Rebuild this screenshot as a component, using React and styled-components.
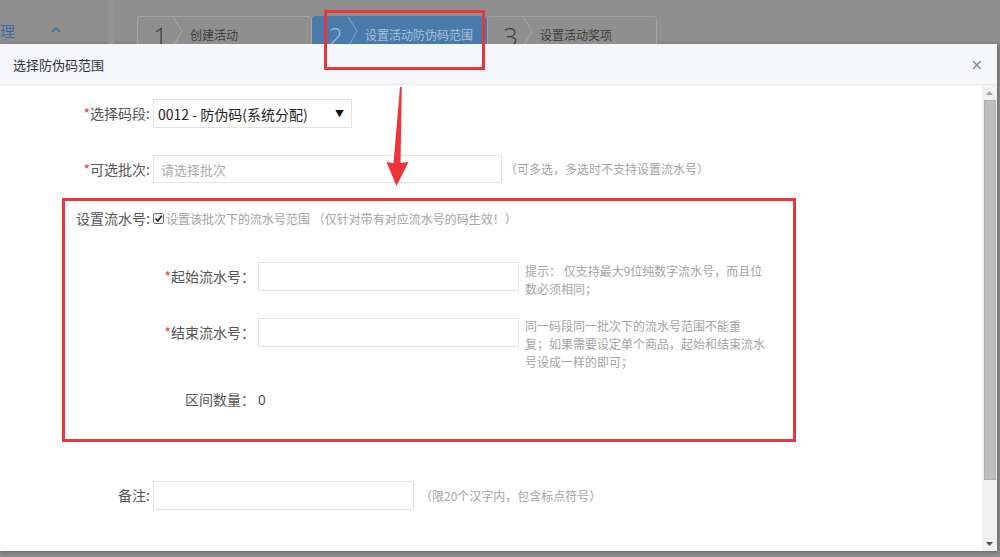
import React from 'react';
import styled, { createGlobalStyle } from 'styled-components';

const GlobalStyle = createGlobalStyle`
  html, body { margin: 0; padding: 0; }
  body {
    background: #8f8f8f;
    font-family: "Noto Sans CJK SC", "Noto Sans", sans-serif;
    overflow: hidden;
  }
`;

const Page = styled.div`
  position: relative;
  width: 1000px;
  height: 557px;
  overflow: hidden;
`;

/* ---- dimmed page behind the dialog ---- */
const BackTop = styled.div`
  display: flex;
  height: 44px;
  overflow: hidden;
`;

const Sidebar = styled.div`
  width: 108px;
  flex-shrink: 0;
  border-right: 6px solid #939393;
  display: flex;
  align-items: flex-start;
  padding-top: 20px;
  gap: 36px;
  color: #3f6c9c;
  font-size: 15px;
`;

const Steps = styled.div`
  display: flex;
  padding: 16px 0 0 23px;
`;

const Step = styled.div`
  width: ${p => p.$w}px;
  height: 44px;
  box-sizing: border-box;
  display: flex;
  align-items: flex-start;
  padding-left: 15px;
  background: ${p => (p.$active ? '#4a7aab' : '#8f8f8f')};
  border: 1px solid ${p => (p.$active ? '#4a7aab' : '#a2a2a2')};
  border-bottom: none;
  border-radius: 4px 4px 0 0;
  color: ${p => (p.$active ? '#a8c0d9' : '#3c3c3c')};
`;

const StepNum = styled.span`
  font-family: "Open Sans", "DejaVu Sans", sans-serif;
  font-weight: 300;
  font-size: 26px;
  line-height: 26px;
  margin-top: 6px;
  width: 14px;
`;

const StepSep = styled.svg`
  margin: 0 6px 0 5px;
  flex-shrink: 0;
`;

const StepText = styled.span`
  font-size: 12px;
  line-height: 14px;
  margin-top: 11px;
`;

/* ---- dialog ---- */
const Modal = styled.div`
  width: 997px;
  height: 507px;
  background: #fff;
  box-shadow: 1px 1px 4px rgba(0, 0, 0, 0.35);
  display: flex;
  flex-direction: column;
`;

const Header = styled.div`
  height: 40px;
  flex-shrink: 0;
  display: flex;
  align-items: center;
  justify-content: space-between;
  padding: 0 14px 0 13px;
  background: #f6f7fa;
  border-bottom: 1px solid #e9e9e9;
`;

const Title = styled.span`
  font-size: 13px;
  color: #333;
`;

const Close = styled.span`
  font-family: "DejaVu Sans", sans-serif;
  font-size: 15px;
  color: #8a8a8a;
  margin-top: 1px;
`;

const Body = styled.div`
  flex: 1;
  display: flex;
  min-height: 0;
`;

const Content = styled.div`
  position: relative;
  flex: 1;
  display: flex;
  flex-direction: column;
  padding-top: 14px;
`;

const Row = styled.div`
  display: flex;
  align-items: ${p => (p.$top ? 'flex-start' : 'center')};
  margin-top: ${p => p.$mt || 0}px;
`;

const Label = styled.label`
  width: ${p => p.$w}px;
  flex-shrink: 0;
  height: ${p => p.$h || 29}px;
  line-height: ${p => p.$h || 29}px;
  text-align: right;
  margin-right: 3px;
  font-size: 14px;
  color: #555;
`;

const Star = styled.span`
  color: #e4393c;
`;

const Select = styled.div`
  width: 199px;
  height: 29px;
  box-sizing: border-box;
  border: 1px solid #e2e2e2;
  display: flex;
  align-items: center;
  justify-content: space-between;
  padding: 0 7px 0 4px;
  font-size: 14px;
  color: #222;
`;

const Caret = styled.span`
  font-size: 9px;
  color: #111;
`;

const Input = styled.div`
  width: ${p => p.$w}px;
  height: ${p => p.$h || 29}px;
  box-sizing: border-box;
  border: 1px solid #e3e3e3;
  flex-shrink: 0;
  display: flex;
  align-items: center;
  padding-left: 7px;
  font-size: 13px;
  color: #aaa;
`;

const Hint = styled.div`
  font-size: 12px;
  line-height: 18px;
  color: #a4a4a4;
  margin-left: ${p => p.$ml || 8}px;
  width: ${p => (p.$w ? `${p.$w}px` : 'auto')};
  margin-top: ${p => p.$mtop || 0}px;
`;

const Check = styled.span`
  width: 11px;
  height: 11px;
  box-sizing: border-box;
  border: 1px solid #777;
  border-radius: 2px;
  background: #f1f1f1;
  display: flex;
  align-items: center;
  justify-content: center;
  margin-right: 2px;
`;

const CheckText = styled.span`
  font-size: 12px;
  color: #a4a4a4;
`;

const Value = styled.span`
  font-size: 14px;
  color: #555;
`;

/* ---- fake scrollbar ---- */
const ScrollBar = styled.div`
  width: 15px;
  flex-shrink: 0;
  background: #f1f1f1;
  display: flex;
  flex-direction: column;
  align-items: center;
`;

const ScrollArrow = styled.div`
  height: 15px;
  display: flex;
  align-items: center;
  justify-content: center;
`;

const Thumb = styled.div`
  width: 12px;
  height: 380px;
  background: #bdbdbd;
  border: 1px solid #b0b0b0;
  box-sizing: border-box;
`;

const Spacer = styled.div`
  flex: 1;
`;

/* ---- red annotations ---- */
const RedBox = styled.div`
  position: absolute;
  left: ${p => p.$x}px;
  top: ${p => p.$y}px;
  width: ${p => p.$w}px;
  height: ${p => p.$h}px;
  box-sizing: border-box;
  border: 3px solid #e4383d;
  pointer-events: none;
`;

const ArrowLayer = styled.svg`
  position: absolute;
  left: 0;
  top: 0;
  pointer-events: none;
`;

const StepItem = ({ n, text, w, active }) => (
  <Step $w={w} $active={active}>
    <StepNum>{n}</StepNum>
    <StepSep width="12" height="30" viewBox="0 0 12 30">
      <polyline
        points="1,0 10,14 1,30"
        fill="none"
        stroke={active ? '#86a6c8' : '#a6a6a6'}
        strokeWidth="1"
      />
    </StepSep>
    <StepText>{text}</StepText>
  </Step>
);

export default function App() {
  return (
    <Page>
      <GlobalStyle />
      <BackTop>
        <Sidebar>
          <span>理</span>
          <svg width="10" height="8" viewBox="0 0 10 8" style={{ marginTop: 6 }}>
            <polyline points="1,6 5,2 9,6" fill="none" stroke="#3f6c9c" strokeWidth="1.6" />
          </svg>
        </Sidebar>
        <Steps>
          <StepItem n="1" text="创建活动" w={175} />
          <StepItem n="2" text="设置活动防伪码范围" w={175} active />
          <StepItem n="3" text="设置活动奖项" w={170} />
        </Steps>
      </BackTop>

      <Modal>
        <Header>
          <Title>选择防伪码范围</Title>
          <Close>×</Close>
        </Header>
        <Body>
          <Content>
            <Row>
              <Label $w={150}><Star>*</Star>选择码段:</Label>
              <Select>
                <span>0012 - 防伪码(系统分配)</span>
                <Caret>▼</Caret>
              </Select>
            </Row>

            <Row $mt={27}>
              <Label $w={150} $h={28}><Star>*</Star>可选批次:</Label>
              <Input $w={349} $h={28}>请选择批次</Input>
              <Hint $ml={3}>（可多选，多选时不支持设置流水号）</Hint>
            </Row>

            <Row $mt={25}>
              <Label $w={150} $h={20}>设置流水号:</Label>
              <Check>
                <svg width="9" height="9" viewBox="0 0 9 9">
                  <polyline points="1.5,4.5 3.8,7 7.8,1.8" fill="none" stroke="#222" strokeWidth="1.7" />
                </svg>
              </Check>
              <CheckText>设置该批次下的流水号范围 （仅针对带有对应流水号的码生效！）</CheckText>
            </Row>

            <Row $mt={34} $top>
              <Label $w={255}><Star>*</Star>起始流水号：</Label>
              <Input $w={261} />
              <Hint $ml={6} $w={242}>提示： 仅支持最大9位纯数字流水号，而且位数必须相同；</Hint>
            </Row>

            <Row $mt={20} $top>
              <Label $w={255}><Star>*</Star>结束流水号：</Label>
              <Input $w={261} />
              <Hint $ml={6} $w={250} $mtop={-1}>
                同一码段同一批次下的流水号范围不能重<br />
                复；如果需要设定单个商品，起始和结束流水<br />
                号设成一样的即可；
              </Hint>
            </Row>

            <Row $mt={18}>
              <Label $w={255} $h={20}>区间数量：</Label>
              <Value>0</Value>
            </Row>

            <Row $mt={72}>
              <Label $w={150}>备注:</Label>
              <Input $w={261} />
              <Hint $ml={6}>（限20个汉字内，包含标点符号）</Hint>
            </Row>

            <RedBox $x={62} $y={113} $w={734} $h={244} />
          </Content>

          <ScrollBar>
            <ScrollArrow>
              <svg width="7" height="4" viewBox="0 0 7 4"><polygon points="0,4 3.5,0 7,4" fill="#a3a3a3" /></svg>
            </ScrollArrow>
            <Thumb />
            <Spacer />
            <ScrollArrow>
              <svg width="7" height="4" viewBox="0 0 7 4"><polygon points="0,0 3.5,4 7,0" fill="#505050" /></svg>
            </ScrollArrow>
          </ScrollBar>
        </Body>
      </Modal>

      <RedBox $x={324} $y={10} $w={161} $h={60} />
      <ArrowLayer width="1000" height="557" viewBox="0 0 1000 557">
        <polygon
          points="400,87 401.8,87 400.5,163 408.5,162 396.5,186 386.5,162 393.5,163"
          fill="#ef3338"
        />
      </ArrowLayer>
    </Page>
  );
}
